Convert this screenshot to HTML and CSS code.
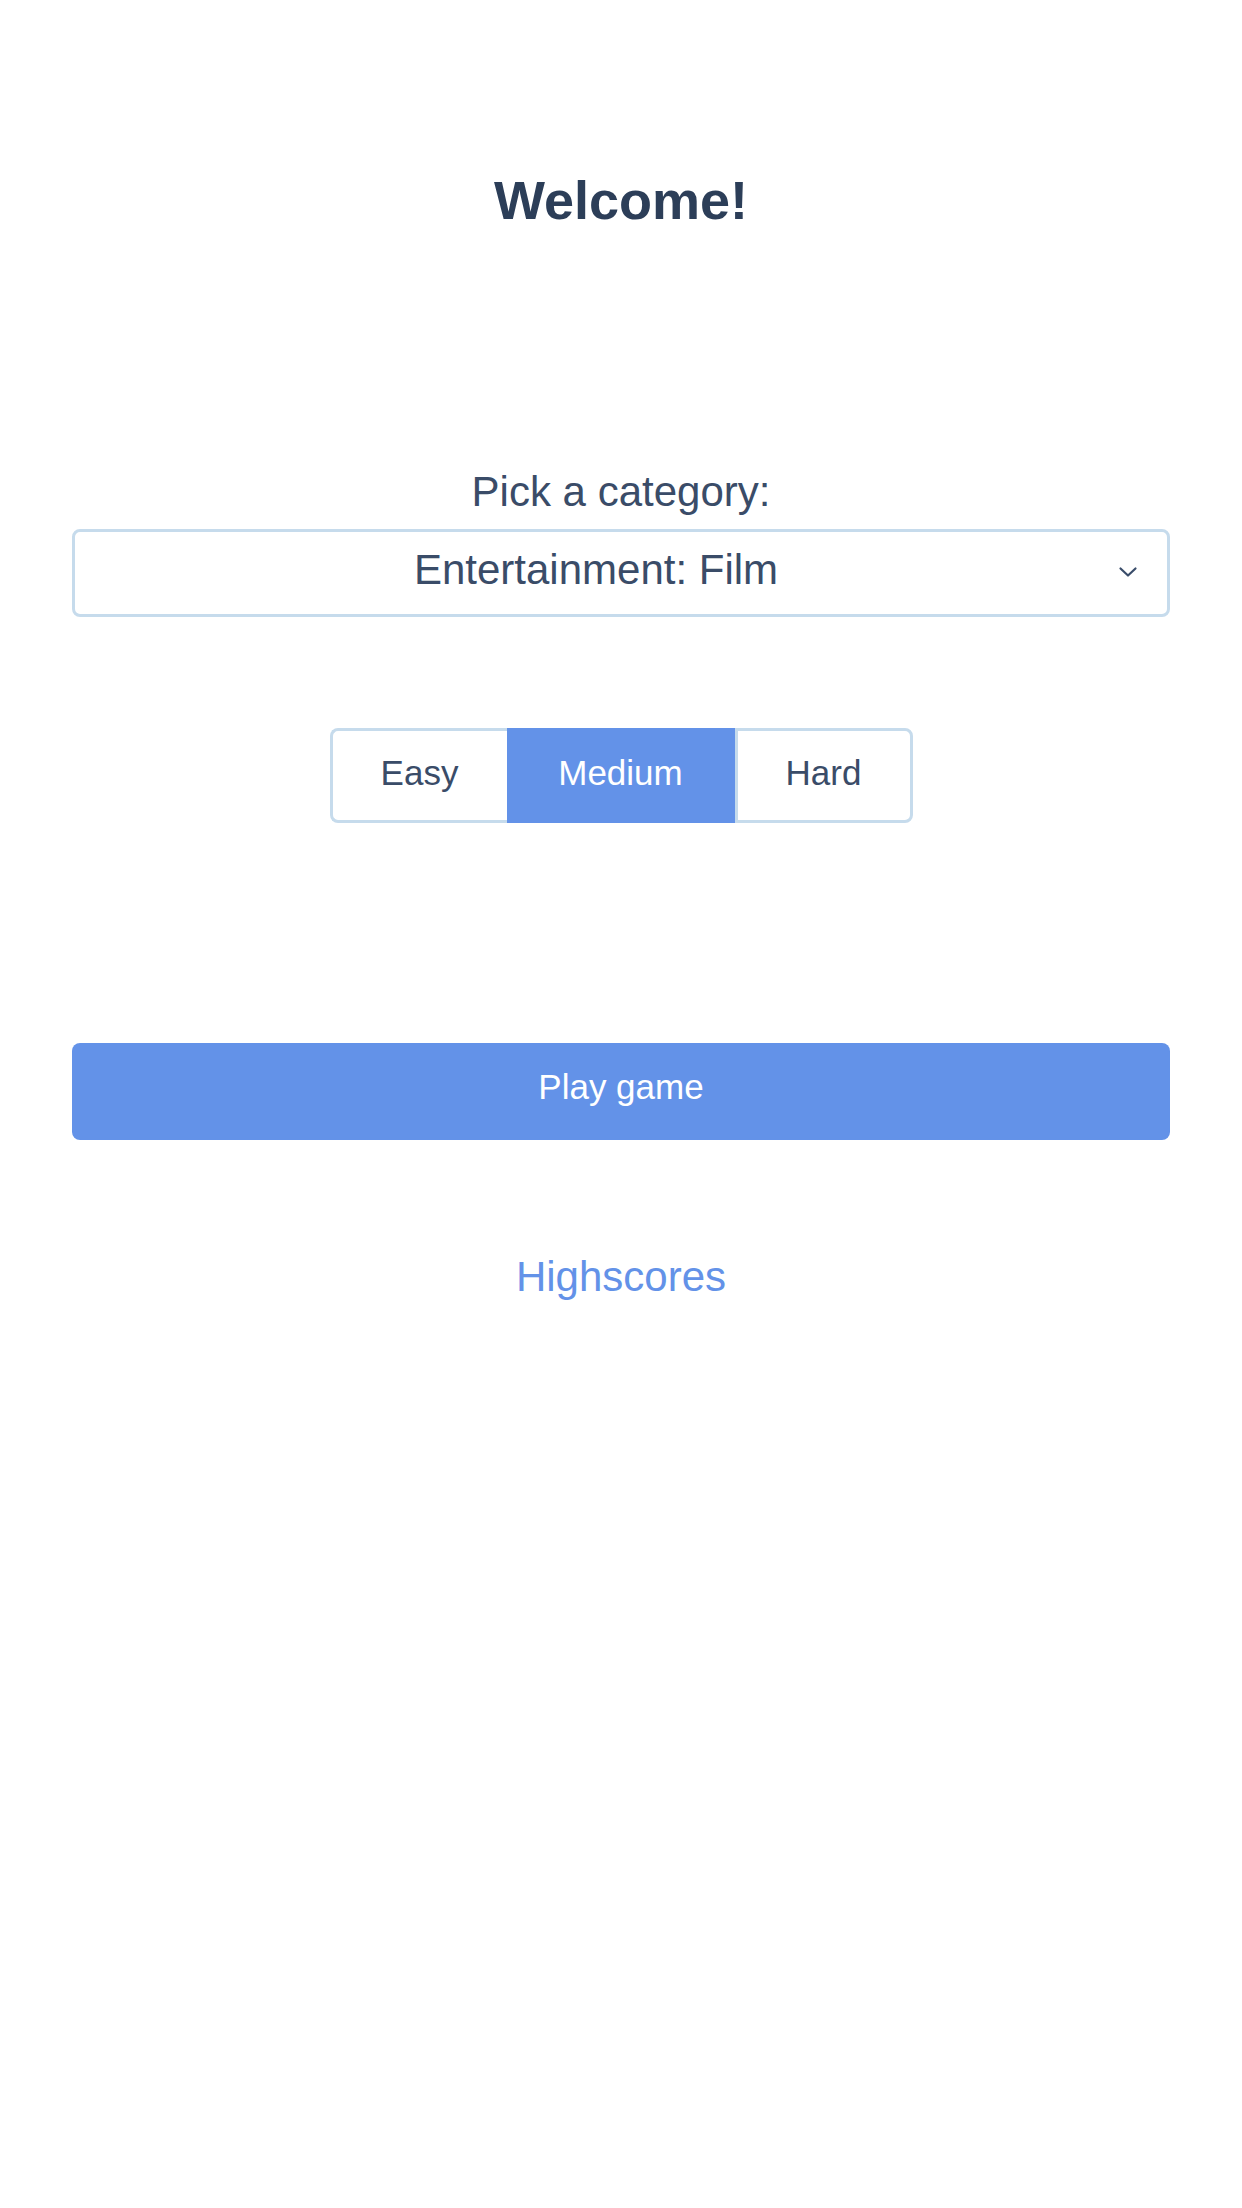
FILE: index.html
```html
<!DOCTYPE html>
<html lang="en">
<head>
<meta charset="utf-8">
<title>Quiz</title>
<link rel="stylesheet" href="styles.css">
</head>
<body>
<main class="app">
  <h1 class="title">Welcome!</h1>
  <section class="category">
    <label class="label" for="cat">Pick a category:</label>
    <div class="select-wrap">
      <select id="cat" class="select">
        <option>Entertainment: Film</option>
      </select>
      <svg class="chevron" width="20" height="12" viewBox="0 0 20 12" aria-hidden="true">
        <polyline points="2.5,2.5 10,9.5 17.5,2.5" fill="none" stroke="#3a4d6a" stroke-width="2.2" stroke-linecap="round" stroke-linejoin="round"/>
      </svg>
    </div>
  </section>
  <div class="difficulty">
    <button class="seg seg-easy">Easy</button>
    <button class="seg seg-medium active">Medium</button>
    <button class="seg seg-hard">Hard</button>
  </div>
  <button class="play">Play game</button>
  <a class="highscores" href="#">Highscores</a>
</main>
</body>
</html>
```
FILE: styles.css
```css
html, body {
  margin: 0;
  padding: 0;
  background: #ffffff;
}

body {
  font-family: "Liberation Sans", Arial, Helvetica, sans-serif;
  color: #3a4c68;
}

.app {
  display: flex;
  flex-direction: column;
  align-items: stretch;
  padding: 169px 72px 0;
}

.title {
  margin: 0;
  font-size: 54px;
  line-height: 62px;
  font-weight: 700;
  text-align: center;
  color: #2c3e58;
}

.category {
  margin-top: 237px;
  display: flex;
  flex-direction: column;
}

.label {
  display: block;
  font-size: 42px;
  line-height: 48px;
  text-align: center;
  color: #3a4c68;
}

.select-wrap {
  position: relative;
  margin-top: 13px;
}

.select {
  display: block;
  width: 100%;
  height: 88px;
  box-sizing: border-box;
  margin: 0;
  padding: 0 50px 8px 0;
  border: 3px solid #c6dbec;
  border-radius: 8px;
  background: #ffffff;
  font-family: inherit;
  font-size: 42px;
  color: #3a4c68;
  text-align: center;
  text-align-last: center;
  appearance: none;
  -webkit-appearance: none;
  outline: none;
}

.chevron {
  position: absolute;
  right: 32px;
  top: 37px;
  pointer-events: none;
}

.difficulty {
  margin-top: 111px;
  display: flex;
  justify-content: center;
}

.seg {
  box-sizing: border-box;
  height: 95px;
  margin: 0;
  padding: 0 0 5px 0;
  font-family: inherit;
  font-size: 35px;
  color: #3a4c68;
  background: #ffffff;
  border: 3px solid #c6dbec;
  text-align: center;
  cursor: pointer;
}

.seg-easy {
  width: 177px;
  border-right: 0;
  border-radius: 8px 0 0 8px;
}

.seg-medium {
  width: 228px;
  border-radius: 0;
}

.seg-hard {
  width: 178px;
  border-radius: 0 8px 8px 0;
}

.seg.active {
  background: #6392e8;
  border-color: #6392e8;
  color: #ffffff;
}

.play {
  margin-top: 220px;
  height: 97px;
  box-sizing: border-box;
  padding: 0 0 9px 0;
  border: 0;
  border-radius: 8px;
  background: #6392e8;
  color: #ffffff;
  font-family: inherit;
  font-size: 35px;
  cursor: pointer;
}

.highscores {
  margin-top: 113px;
  align-self: center;
  font-size: 42px;
  line-height: 48px;
  color: #6392e8;
  text-decoration: none;
}
```
